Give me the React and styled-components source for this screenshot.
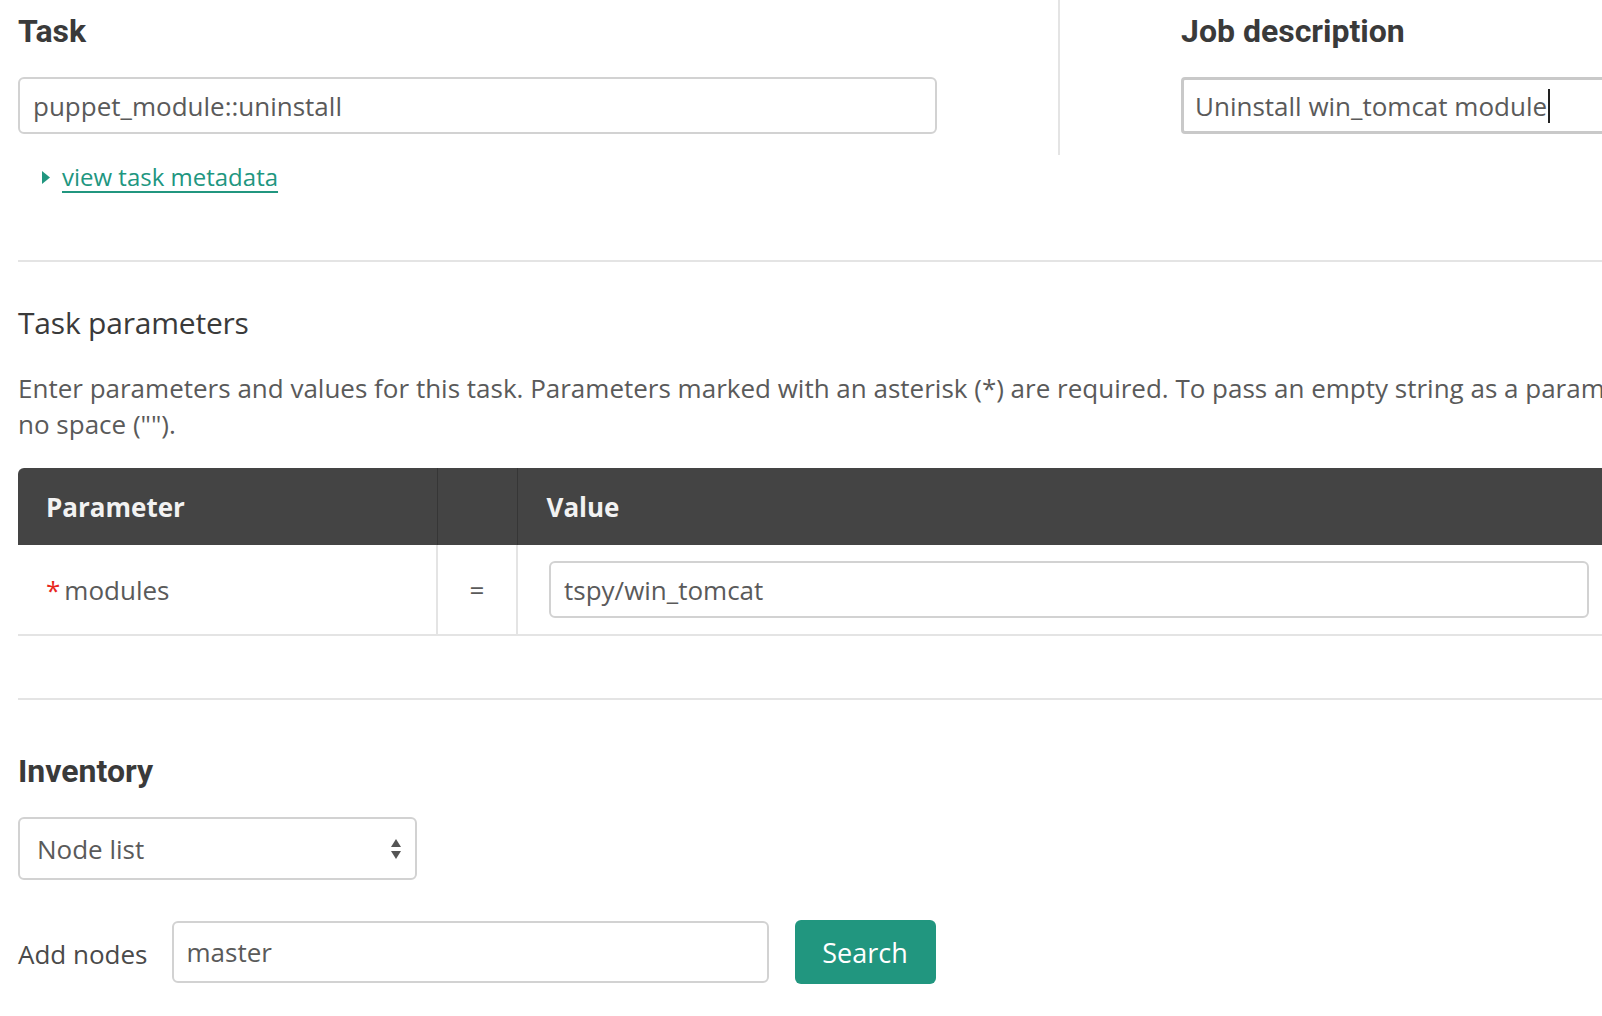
import React from 'react';
import styled, { createGlobalStyle } from 'styled-components';

const palette = {
  heading: '#3a3a3a',
  text: '#5a5a5a',
  border: '#d2d2d2',
  rule: '#e4e4e4',
  teal: '#21967f',
  dark: '#444444',
  red: '#e8261c',
};

const GlobalStyle = createGlobalStyle`
  html, body {
    margin: 0;
    padding: 0;
    background: #fff;
    overflow: hidden;
  }
  body {
    font-family: "Open Sans", "Liberation Sans", sans-serif;
    color: ${palette.text};
  }
  * { box-sizing: border-box; }
`;

const Page = styled.div`
  width: 2120px;
  padding-left: 18px;
`;

const TopGrid = styled.div`
  display: grid;
  grid-template-columns: 1040px 1042px;
  align-items: start;
`;

const Column = styled.div`
  padding-top: 12px;
  ${(p) =>
    p.$divided &&
    `
    border-left: 2px solid ${palette.rule};
    padding-left: 121px;
    padding-bottom: 21px;
  `}
`;

const Heading = styled.h2`
  margin: ${(p) => p.$top || '0'} 0 0;
  font-family: Roboto, "Liberation Sans", sans-serif;
  font-weight: 700;
  font-size: 32px;
  line-height: 38px;
  color: ${palette.heading};
`;

const SubHeading = styled.h3`
  margin: 41px 0 0;
  font-family: "Open Sans", "Liberation Sans", sans-serif;
  font-weight: 400;
  font-size: 30px;
  line-height: 40px;
  color: ${palette.heading};
  letter-spacing: -0.2px;
`;

const TextInput = styled.input`
  display: block;
  width: ${(p) => p.$width || '919px'};
  height: ${(p) => p.$height || '57px'};
  margin-top: ${(p) => p.$top || '0'};
  padding: 0 13px;
  border: 2px solid ${palette.border};
  border-radius: 6px;
  font-family: "Open Sans", "Liberation Sans", sans-serif;
  font-size: 26px;
  color: ${palette.text};
  background: #fff;
  outline: none;
`;

const FocusField = styled.div`
  display: flex;
  align-items: center;
  width: 919px;
  height: 57px;
  margin-top: 27px;
  padding: 0 11px;
  border: 3px solid #c9c9c9;
  border-radius: 4px;
  font-size: 26px;
  color: ${palette.text};
`;

const Caret = styled.span`
  display: inline-block;
  width: 2px;
  height: 34px;
  background: #222;
  margin-left: 1px;
`;

const MetaLink = styled.a`
  display: flex;
  align-items: center;
  gap: 12px;
  margin: 27px 0 0 24px;
  font-size: 24px;
  line-height: 32px;
  color: ${palette.teal};
  text-decoration: underline;
  text-decoration-thickness: 2px;
  text-underline-offset: 5px;
  cursor: pointer;
`;

const Rule = styled.hr`
  margin: ${(p) => p.$top} 0 0;
  border: 0;
  height: 2px;
  background: ${palette.rule};
`;

const Help = styled.p`
  margin: 27px 0 0;
  font-size: 26px;
  line-height: 36px;
  color: ${palette.text};
`;

const Table = styled.table`
  width: 2082px;
  margin-top: 26px;
  border-collapse: collapse;
  font-size: 26px;
`;

const HeadCell = styled.th`
  height: 77px;
  padding: 0 0 0 ${(p) => p.$pad || '28px'};
  width: ${(p) => p.$width || 'auto'};
  text-align: left;
  background: ${palette.dark};
  color: #f2f2f2;
  font-weight: 700;
  font-size: 26px;
  border-left: 1px solid #363636;
  &:first-child {
    border-left: 0;
    border-top-left-radius: 6px;
  }
`;

const Cell = styled.td`
  height: 90px;
  padding: 0 0 0 ${(p) => p.$pad || '28px'};
  text-align: ${(p) => p.$align || 'left'};
  border-bottom: 2px solid ${palette.rule};
  border-left: 2px solid ${palette.rule};
  color: ${palette.text};
  &:first-child {
    border-left: 0;
  }
`;

const Required = styled.span`
  color: ${palette.red};
  margin-right: 4px;
`;

const SelectBox = styled.div`
  display: flex;
  align-items: center;
  justify-content: space-between;
  width: 399px;
  height: 63px;
  margin-top: 27px;
  padding: 0 13px 0 17px;
  border: 2px solid ${palette.border};
  border-radius: 6px;
  font-size: 26px;
  color: ${palette.text};
`;

const NodeRow = styled.div`
  display: flex;
  align-items: center;
  margin-top: 40px;
`;

const Label = styled.label`
  font-size: 26px;
  color: #4a4a4a;
  margin-right: 24px;
  padding-top: 4px;
`;

const Button = styled.button`
  height: 64px;
  width: 141px;
  margin-left: 26px;
  border: 0;
  border-radius: 6px;
  background: ${palette.teal};
  color: #fff;
  font-family: "Open Sans", "Liberation Sans", sans-serif;
  font-size: 27px;
  cursor: pointer;
`;

const App = () => {
  return (
    <Page>
      <GlobalStyle />
      <TopGrid>
        <Column>
          <Heading>Task</Heading>
          <TextInput $top="27px" readOnly value="puppet_module::uninstall" />
          <MetaLink>
            <svg width="8" height="13" viewBox="0 0 8 13">
              <polygon points="0,0 8,6.5 0,13" fill={palette.teal} />
            </svg>
            <span>view task metadata</span>
          </MetaLink>
        </Column>
        <Column $divided>
          <Heading>Job description</Heading>
          <FocusField>
            Uninstall win_tomcat module
            <Caret />
          </FocusField>
        </Column>
      </TopGrid>

      <Rule $top="67px" />

      <SubHeading>Task parameters</SubHeading>
      <Help>
        Enter parameters and values for this task. Parameters marked with an asterisk (*) are
        required. To pass an empty string as a parameter value, enter two double quotes with no
        space ("").
      </Help>

      <Table>
        <thead>
          <tr>
            <HeadCell $width="419px">Parameter</HeadCell>
            <HeadCell $width="80px" />
            <HeadCell $pad="29px">Value</HeadCell>
          </tr>
        </thead>
        <tbody>
          <tr>
            <Cell>
              <Required>*</Required>modules
            </Cell>
            <Cell $pad="0" $align="center">
              =
            </Cell>
            <Cell $pad="31px">
              <TextInput $width="1040px" readOnly value="tspy/win_tomcat" />
            </Cell>
          </tr>
        </tbody>
      </Table>

      <Rule $top="62px" />

      <Heading $top="52px">Inventory</Heading>
      <SelectBox>
        <span>Node list</span>
        <svg width="12" height="24" viewBox="0 0 12 24">
          <polygon points="1,10 11,10 6,2" fill="#555" />
          <polygon points="1,14 11,14 6,22" fill="#555" />
        </svg>
      </SelectBox>

      <NodeRow>
        <Label>Add nodes</Label>
        <TextInput $width="597px" $height="62px" readOnly value="master" />
        <Button>Search</Button>
      </NodeRow>
    </Page>
  );
};

export default App;
